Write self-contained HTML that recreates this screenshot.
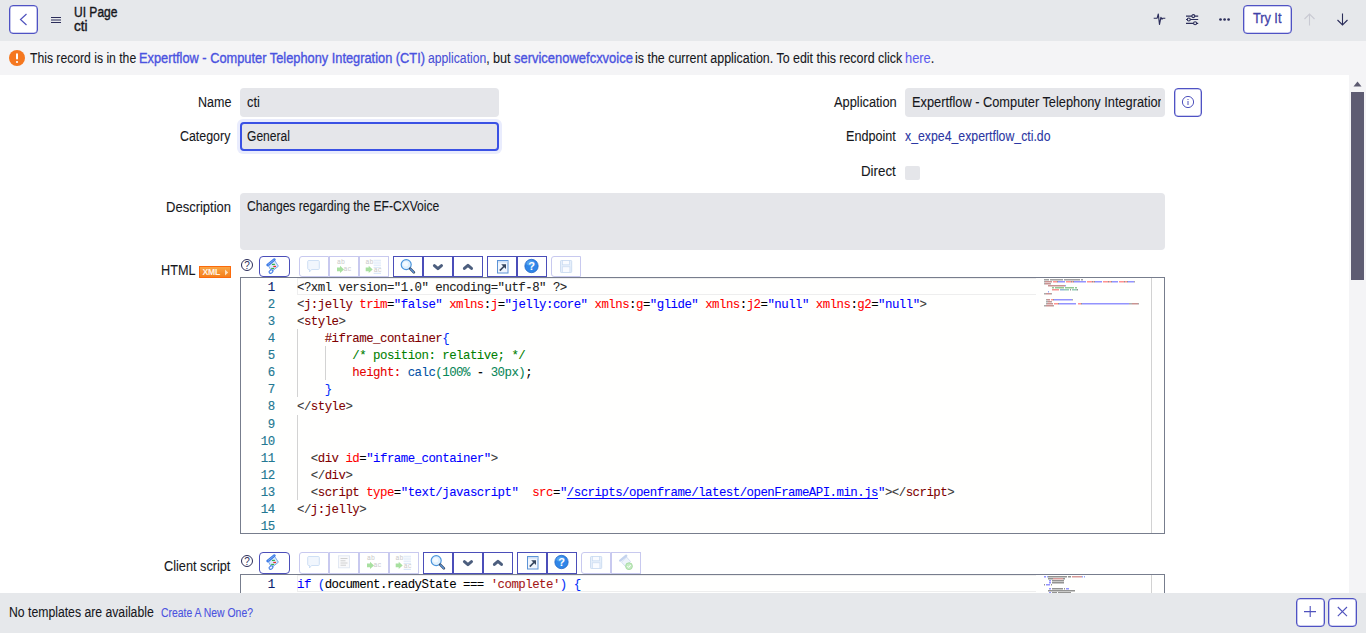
<!DOCTYPE html>
<html><head><meta charset="utf-8">
<style>
*{box-sizing:border-box;margin:0;padding:0}
html,body{width:1366px;height:633px;overflow:hidden;background:#fff}
body{position:relative;font-family:"Liberation Sans",sans-serif;color:#1b1d24;font-size:12.5px}
.abs{position:absolute}
#hdr{left:0;top:0;width:1366px;height:41px;background:#e6e8eb}
#ban{left:0;top:41px;width:1366px;height:34px;background:#f4f4f6}
#form{left:0;top:75px;width:1349px;height:518px;background:#fff;overflow:hidden}
#track{left:1349px;top:75px;width:17px;height:518px;background:#f4f4f6}
#foot{left:0;top:593px;width:1366px;height:40px;background:#e6e8eb}
.btnb{position:absolute;border:1px solid #4f52c4;border-radius:4px;background:#fff;box-shadow:inset 0 0 0 0.6px rgba(79,82,196,0.55)}
.t{position:absolute;white-space:nowrap;line-height:16px;height:16px;transform-origin:0 0;-webkit-text-stroke:0.1px currentColor}
.r{text-align:right}
.fld{position:absolute;background:#e5e6ea;border-radius:4px;white-space:nowrap;overflow:hidden;line-height:29px;padding-left:6.5px}
.ed{position:absolute;left:240px;width:925px;border:1px solid #777d8d;background:#fffffe;overflow:hidden}
.gut{position:absolute;left:0;top:0;width:56px;bottom:0;background:#fffffe}
.lnum{position:absolute;left:0;width:33.6px;text-align:right;color:#237893;font-family:"Liberation Mono",monospace;font-size:12.4px;letter-spacing:-0.52px;line-height:17.07px;-webkit-text-stroke:0.15px currentColor}
.code{position:absolute;left:56px;top:0;font-family:"Liberation Mono",monospace;font-size:12.4px;letter-spacing:-0.52px;line-height:17.07px;white-space:pre;-webkit-text-stroke:0.08px currentColor}
.ln{height:17.07px}
.cur{position:absolute;left:56px;width:739px;height:17px;border-top:1px solid #eeeeee;border-bottom:1px solid #eeeeee;border-left:1px solid #eeeeee}
.vsep{position:absolute;left:910px;top:0;bottom:0;width:1px;background:#d2d2d2}
.tb{position:absolute;height:21px;border:1px solid #4d50bb;background:#fff;display:flex}
.tb.dis{border-color:#c9caee}
.tb>div{width:30px;height:100%;border-right:1px solid #4d50bb;position:relative}
.tb.dis>div{border-right-color:#c9caee}
.tb>div:last-child{border-right:none}
.tb svg{position:absolute;left:50%;top:50%;transform:translate(-50%,-50%)}
.help{position:absolute;width:12.5px;height:12.5px;border:1px solid #2b2d5a;border-radius:50%;font-size:10px;line-height:11px;text-align:center;color:#2b2d5a}
.ig{position:absolute;width:1px;background:#d3d3d3}
</style></head><body>
<div id="hdr" class="abs"></div>
<div class="btnb" style="left:9px;top:5px;width:29px;height:29px"></div>
<svg class="abs" style="left:9px;top:5px" width="29" height="29" viewBox="0 0 29 29"><path d="M17.5 9 L11.5 14.5 L17.5 20" fill="none" stroke="#4f52bd" stroke-width="1.2"/></svg>
<svg class="abs" style="left:50px;top:15px" width="12" height="10" viewBox="0 0 12 10"><path d="M1 2.5H11M1 5H11M1 7.5H11" stroke="#2b2d5a" stroke-width="1.1"/></svg>
<div class="t" style="left:73.50px;top:3.85px;font-size:14px;transform:scaleX(0.859);color:#16171c;-webkit-text-stroke:0.4px #16171c">UI Page</div>
<div class="t" style="left:74.40px;top:17.85px;font-size:14px;transform:scaleX(0.971);color:#16171c;-webkit-text-stroke:0.4px #16171c">cti</div>
<svg class="abs" style="left:1150px;top:10px" width="20" height="20" viewBox="0 0 20 20"><path d="M3.7 8.2H7.2L8.3 4L9.5 14.5L10.9 7.3L12 9.2L12.6 8.2H15.3" fill="none" stroke="#2b2d5a" stroke-width="1.15" stroke-linejoin="round"/></svg>
<svg class="abs" style="left:1180px;top:10px" width="20" height="20" viewBox="0 0 20 20"><g fill="none" stroke="#2b2d5a" stroke-width="1.1"><path d="M6 6.1H18.2M6 9.5H18.2M6 13.4H18.2"/><circle cx="13.3" cy="6.1" r="1.5" fill="#e6e8eb"/><circle cx="8.8" cy="9.5" r="1.5" fill="#e6e8eb"/><circle cx="15.1" cy="13.2" r="1.5" fill="#e6e8eb"/></g></svg>
<svg class="abs" style="left:1218px;top:17px" width="13" height="5" viewBox="0 0 13 5"><circle cx="2.5" cy="2.5" r="1.35" fill="#2b2d5a"/><circle cx="6.6" cy="2.5" r="1.35" fill="#2b2d5a"/><circle cx="10.6" cy="2.5" r="1.35" fill="#2b2d5a"/></svg>
<div class="btnb" style="left:1243px;top:5px;width:49px;height:29px"></div>
<div class="t" style="left:1253.00px;top:10.35px;font-size:14px;transform:scaleX(0.906);color:#3f42a8;-webkit-text-stroke:0.3px #3f42a8">Try It</div>
<svg class="abs" style="left:1303px;top:13px" width="13" height="13" viewBox="0 0 13 13"><path d="M6.5 12.5V1M1.5 6L6.5 1L11.5 6" fill="none" stroke="#c9cad3" stroke-width="1.1"/></svg>
<svg class="abs" style="left:1336px;top:13px" width="13" height="13" viewBox="0 0 13 13"><path d="M6.5 0.5V12M1.5 7L6.5 12L11.5 7" fill="none" stroke="#2b2d5a" stroke-width="1.1"/></svg>
<div id="ban" class="abs"></div>
<svg class="abs" style="left:9px;top:50px" width="16" height="16" viewBox="0 0 16 16"><circle cx="8" cy="8" r="8" fill="#f5771f"/><rect x="7" y="3.2" width="2" height="6.3" rx="1" fill="#fff"/><circle cx="8" cy="12" r="1.1" fill="#fff"/></svg>
<div class="t" style="left:30.00px;top:49.95px;font-size:14px;transform:scaleX(0.869);color:#16171c">This record is in the</div>
<div class="t" style="left:139.10px;top:49.95px;font-size:14px;transform:scaleX(0.915);color:#4a52e0;-webkit-text-stroke:0.35px #4a52e0">Expertflow - Computer Telephony Integration (CTI)</div>
<div class="t" style="left:428.00px;top:49.95px;font-size:14px;transform:scaleX(0.871);color:#16171c"><span style="color:#4a4fd6">application</span>,</div>
<div class="t" style="left:492.60px;top:49.95px;font-size:14px;transform:scaleX(0.905);color:#16171c">but</div>
<div class="t" style="left:514.00px;top:49.95px;font-size:14px;transform:scaleX(0.926);color:#4a52e0;-webkit-text-stroke:0.35px #4a52e0">servicenowefcxvoice</div>
<div class="t" style="left:634.90px;top:49.95px;font-size:14px;transform:scaleX(0.888);color:#16171c">is the current application. To edit this record click</div>
<div class="t" style="left:904.60px;top:49.95px;font-size:14px;transform:scaleX(0.917);color:#16171c"><span style="color:#5b5bef">here</span>.</div>
<div id="form" class="abs"></div>
<div class="t" style="left:197.90px;top:94.15px;font-size:14px;transform:scaleX(0.894);color:#16171c">Name</div>
<div class="fld" style="left:240px;top:88px;width:259px;height:29px"></div>
<div class="t" style="left:246.50px;top:94.15px;font-size:14px;transform:scaleX(0.921);color:#16171c">cti</div>
<div class="t" style="left:180.00px;top:128.15px;font-size:14px;transform:scaleX(0.886);color:#16171c">Category</div>
<div class="abs" style="left:237px;top:119px;width:265px;height:35px;border-radius:6px;background:#e9ecfd"></div>
<div class="fld" style="left:240px;top:122px;width:259px;height:29px;border:2px solid #3a51e4"></div>
<div class="t" style="left:247.00px;top:128.15px;font-size:14px;transform:scaleX(0.861);color:#16171c">General</div>
<div class="t" style="left:833.70px;top:94.45px;font-size:14px;transform:scaleX(0.916);color:#16171c">Application</div>
<div class="fld" style="left:905px;top:88px;width:260px;height:29px"></div>
<div class="abs" style="left:905px;top:88px;width:255.5px;height:29px;overflow:hidden"><div class="t" style="left:7.10px;top:6.05px;font-size:14px;transform:scaleX(0.913);color:#16171c">Expertflow - Computer Telephony Integration (CTI)</div></div>
<div class="btnb" style="left:1174px;top:88px;width:28px;height:29px"></div>
<svg class="abs" style="left:1181px;top:95px" width="14" height="14" viewBox="0 0 14 14"><circle cx="7" cy="7" r="5.6" fill="none" stroke="#4f52bd" stroke-width="1"/><rect x="6.5" y="6" width="1" height="4" fill="#4f52bd"/><rect x="6.5" y="4" width="1" height="1" fill="#4f52bd"/></svg>
<div class="t" style="left:845.60px;top:128.05px;font-size:14px;transform:scaleX(0.900);color:#16171c">Endpoint</div>
<div class="t" style="left:905.30px;top:128.05px;font-size:14px;transform:scaleX(0.878);color:#2c37a3">x_expe4_expertflow_cti.do</div>
<div class="t" style="left:860.80px;top:163.05px;font-size:14px;transform:scaleX(0.950);color:#16171c">Direct</div>
<div class="abs" style="left:905px;top:166px;width:14.5px;height:14px;border-radius:2px;background:#e5e6ea"></div>
<div class="t" style="left:166.00px;top:198.95px;font-size:14px;transform:scaleX(0.929);color:#16171c">Description</div>
<div class="fld" style="left:240px;top:193px;width:925px;height:57px"></div>
<div class="t" style="left:246.50px;top:198.45px;font-size:14px;transform:scaleX(0.864);color:#16171c">Changes regarding the EF-CXVoice</div>
<div class="t" style="left:161.20px;top:261.85px;font-size:14px;transform:scaleX(0.905);color:#16171c">HTML</div>
<div class="abs" style="left:199px;top:266px;width:32px;height:12px;background:linear-gradient(#f9a545,#f47f1c);border:1px solid #fb6a0c"><span class="abs" style="left:2.5px;top:-0.5px;font-size:8.6px;line-height:11px;color:#fff3e4;font-weight:bold;letter-spacing:-0.2px">XML</span><svg class="abs" style="left:24px;top:2px" width="5" height="7" viewBox="0 0 5 7"><path d="M1 0.5L4.2 3.5L1 6.5Z" fill="#fde1bf"/></svg></div>
<div class="help" style="left:240.8px;top:258.5px">?</div>
<div class="abs" style="left:259px;top:256px;width:31px;height:21px;background:#fff;border:1.5px solid #4b4eb9;border-radius:4px"></div><svg class="abs" style="left:259px;top:256px" width="31" height="21" viewBox="0 0 31 21"><path d="M9.6 10L15.6 4.4L19.4 10.2L12.6 15.6Z" fill="#d9e9fc" stroke="#6c9fec" stroke-width="0.9"/>
<path d="M8.6 9L15.4 3.6" stroke="#3a78e6" stroke-width="2.6" stroke-linecap="round"/>
<path d="M9.2 8.4L15 3.9" stroke="#8db8f5" stroke-width="0.8" stroke-linecap="round"/>
<ellipse cx="12" cy="15.6" rx="2.1" ry="1.5" fill="#eef5fe" stroke="#3f7ae6" stroke-width="1.1" transform="rotate(-35 12 15.6)"/>
<path d="M12.9 8.4H15.9" stroke="#34b34a" stroke-width="1.2"/><path d="M14.3 10.5H17" stroke="#e3342c" stroke-width="1.3"/><path d="M12.2 12.5H15.1" stroke="#34b34a" stroke-width="1.2"/></svg><div class="abs" style="left:299px;top:256px;width:30px;height:21px;background:#fff;border:1px solid #c8c9ef;border-radius:3px 0 0 3px"></div><svg class="abs" style="left:299px;top:256px" width="30" height="21" viewBox="0 0 30 21"><path d="M8.7 5.5Q8.7 4.5 9.7 4.5H19.3Q20.3 4.5 20.3 5.5V12.5Q20.3 13.5 19.3 13.5H12.5L10.5 16V13.5H9.7Q8.7 13.5 8.7 12.5Z" fill="#f1f6fd" stroke="#cadcf4" stroke-width="0.9"/></svg><div class="abs" style="left:329px;top:256px;width:30px;height:21px;background:#fff;border:1px solid #c8c9ef"></div><svg class="abs" style="left:329px;top:256px" width="30" height="21" viewBox="0 0 30 21"><text x="8" y="8" font-size="6.5" fill="#c9c9c9" font-family="Liberation Mono">ab</text>
<path d="M8 11.6H11V9.8L15 13.4L11 17V15.2H8Z" fill="#a8e0a0"/>
<text x="14.5" y="15.4" font-size="6.5" fill="#c9c9c9" font-family="Liberation Mono">ac</text></svg><div class="abs" style="left:359px;top:256px;width:30px;height:21px;background:#fff;border:1px solid #c8c9ef"></div><svg class="abs" style="left:359px;top:256px" width="30" height="21" viewBox="0 0 30 21"><text x="6.6" y="8" font-size="6.5" fill="#c9c9c9" font-family="Liberation Mono">ab</text>
<path d="M14.6 4.3H22M14.6 6.1H22M14.6 7.9H22M14.6 9.7H22M14.6 11.5H22" stroke="#d6e4f6" stroke-width="0.8"/>
<path d="M6.7 11.6H9.7V9.8L13.7 13.4L9.7 17V15.2H6.7Z" fill="#a8e0a0"/>
<text x="14.8" y="15.6" font-size="6.5" fill="#c9c9c9" font-family="Liberation Mono">ac</text>
<path d="M14.6 17.3H22" stroke="#c6dbf5" stroke-width="0.8"/></svg><div class="abs" style="left:393px;top:256px;width:30px;height:21px;background:#fff;border:1px solid #4b4eb9"></div><svg class="abs" style="left:393px;top:256px" width="30" height="21" viewBox="0 0 30 21"><circle cx="13.2" cy="8.6" r="5" fill="#dff0fd" stroke="#4c95dc" stroke-width="1.2"/><circle cx="12.6" cy="8" r="2.5" fill="#f4faff"/><path d="M17.2 12.6L20.9 16.4" stroke="#3c4a5e" stroke-width="2.6" stroke-linecap="round"/><path d="M17.6 13L20.7 16.2" stroke="#5d95d8" stroke-width="1.3" stroke-linecap="round"/></svg><div class="abs" style="left:423px;top:256px;width:30px;height:21px;background:#fff;border:1px solid #4b4eb9"></div><svg class="abs" style="left:423px;top:256px" width="30" height="21" viewBox="0 0 30 21"><path d="M11.4 9.6L14.95 12.6L18.5 9.6" fill="none" stroke="#4c5e7e" stroke-width="3" stroke-linecap="round" stroke-linejoin="round"/></svg><div class="abs" style="left:453px;top:256px;width:30px;height:21px;background:#fff;border:1px solid #4b4eb9"></div><svg class="abs" style="left:453px;top:256px" width="30" height="21" viewBox="0 0 30 21"><path d="M11.4 12.4L14.95 9.3L18.5 12.4" fill="none" stroke="#4c5e7e" stroke-width="3" stroke-linecap="round" stroke-linejoin="round"/></svg><div class="abs" style="left:487px;top:256px;width:30px;height:21px;background:#fff;border:1px solid #4b4eb9"></div><svg class="abs" style="left:487px;top:256px" width="30" height="21" viewBox="0 0 30 21"><rect x="10.5" y="4.5" width="10.5" height="12.5" fill="#f1f6fd" stroke="#5c93d6" stroke-width="1"/><rect x="11" y="5" width="9.5" height="1.6" fill="#cfe0f6"/><path d="M12.8 14.6L17.6 9.8" stroke="#36465e" stroke-width="1.6"/><path d="M14.2 8.2H19V13Z" fill="#36465e"/></svg><div class="abs" style="left:517px;top:256px;width:30px;height:21px;background:#fff;border:1px solid #4b4eb9"></div><svg class="abs" style="left:517px;top:256px" width="30" height="21" viewBox="0 0 30 21"><circle cx="14.5" cy="10" r="6.7" fill="#2f86e8" stroke="#1c5fc0" stroke-width="0.7"/><ellipse cx="13.6" cy="7" rx="4.2" ry="2.6" fill="#6db5f5" opacity="0.55"/><text x="14.5" y="14.2" font-size="11" font-weight="bold" text-anchor="middle" fill="#fff" font-family="Liberation Sans">?</text></svg><div class="abs" style="left:551px;top:256px;width:30px;height:21px;background:#fff;border:1px solid #c8c9ef;border-radius:3px 0 0 3px"></div><svg class="abs" style="left:551px;top:256px" width="30" height="21" viewBox="0 0 30 21"><rect x="9.5" y="4.5" width="11.2" height="12" rx="0.8" fill="#e6effb" stroke="#c9daf1" stroke-width="0.9"/><rect x="11.5" y="4.6" width="7" height="4.2" fill="#f9fbff" stroke="#c9daf1" stroke-width="0.7"/><rect x="11.3" y="10.8" width="7.6" height="5.6" fill="#f9fbff" stroke="#c9daf1" stroke-width="0.7"/></svg>
<div class="ed" style="top:277px;height:257px">
 <div class="lnum" style="top:2px"><div style="height:17.07px;color:#0b216f">1</div><div style="height:17.07px">2</div><div style="height:17.07px">3</div><div style="height:17.07px">4</div><div style="height:17.07px">5</div><div style="height:17.07px">6</div><div style="height:17.07px">7</div><div style="height:17.07px">8</div><div style="height:17.07px">9</div><div style="height:17.07px">10</div><div style="height:17.07px">11</div><div style="height:17.07px">12</div><div style="height:17.07px">13</div><div style="height:17.07px">14</div><div style="height:17.07px">15</div></div>
 <div class="cur" style="top:0"></div>
 <div class="ig" style="left:56px;top:51.2px;height:68.3px"></div>
 <div class="ig" style="left:84px;top:68.3px;height:34.1px"></div>
 <div class="ig" style="left:56px;top:136.6px;height:85.3px"></div>
 <div class="code" style="top:2px"><div class="ln"><span style="color:#222222">&lt;?xml version="1.0" encoding="utf-8" ?&gt;</span></div><div class="ln"><span style="color:#383838">&lt;</span><span style="color:#800000">j:jelly</span><span style="color:#000000"> </span><span style="color:#ff0000">trim</span><span style="color:#000000">=</span><span style="color:#0000ff">"false"</span><span style="color:#000000"> </span><span style="color:#ff0000">xmlns</span><span style="color:#000000">:</span><span style="color:#ff0000">j</span><span style="color:#000000">=</span><span style="color:#0000ff">"jelly:core"</span><span style="color:#000000"> </span><span style="color:#ff0000">xmlns</span><span style="color:#000000">:</span><span style="color:#ff0000">g</span><span style="color:#000000">=</span><span style="color:#0000ff">"glide"</span><span style="color:#000000"> </span><span style="color:#ff0000">xmlns</span><span style="color:#000000">:</span><span style="color:#ff0000">j2</span><span style="color:#000000">=</span><span style="color:#0000ff">"null"</span><span style="color:#000000"> </span><span style="color:#ff0000">xmlns</span><span style="color:#000000">:</span><span style="color:#ff0000">g2</span><span style="color:#000000">=</span><span style="color:#0000ff">"null"</span><span style="color:#383838">&gt;</span></div><div class="ln"><span style="color:#383838">&lt;</span><span style="color:#800000">style</span><span style="color:#383838">&gt;</span></div><div class="ln"><span style="color:#000000">    </span><span style="color:#800000">#iframe_container</span><span style="color:#0431fa">{</span></div><div class="ln"><span style="color:#000000">        </span><span style="color:#008000">/* position: relative; */</span></div><div class="ln"><span style="color:#000000">        </span><span style="color:#e50000">height:</span><span style="color:#000000"> </span><span style="color:#0451a5">calc</span><span style="color:#098658">(100%</span><span style="color:#000000"> - </span><span style="color:#098658">30px)</span><span style="color:#000000">;</span></div><div class="ln"><span style="color:#000000">    </span><span style="color:#0431fa">}</span></div><div class="ln"><span style="color:#383838">&lt;/</span><span style="color:#800000">style</span><span style="color:#383838">&gt;</span></div><div class="ln"></div><div class="ln"></div><div class="ln"><span style="color:#000000">  </span><span style="color:#383838">&lt;</span><span style="color:#800000">div</span><span style="color:#000000"> </span><span style="color:#ff0000">id</span><span style="color:#000000">=</span><span style="color:#0000ff">"iframe_container"</span><span style="color:#383838">&gt;</span></div><div class="ln"><span style="color:#000000">  </span><span style="color:#383838">&lt;/</span><span style="color:#800000">div</span><span style="color:#383838">&gt;</span></div><div class="ln"><span style="color:#000000">  </span><span style="color:#383838">&lt;</span><span style="color:#800000">script</span><span style="color:#000000"> </span><span style="color:#ff0000">type</span><span style="color:#000000">=</span><span style="color:#0000ff">"text/javascript"</span><span style="color:#000000">  </span><span style="color:#ff0000">src</span><span style="color:#000000">=</span><span style="color:#0000ff">"</span><span style="color:#0000ff;text-decoration:underline;text-underline-offset:2px;text-decoration-skip-ink:none">/scripts/openframe/latest/openFrameAPI.min.js</span><span style="color:#0000ff">"</span><span style="color:#383838">&gt;&lt;/</span><span style="color:#800000">script</span><span style="color:#383838">&gt;</span></div><div class="ln"><span style="color:#383838">&lt;/</span><span style="color:#800000">j:jelly</span><span style="color:#383838">&gt;</span></div><div class="ln"></div></div>
 <svg class="abs" style="left:803px;top:1px;opacity:0.42" width="110" height="32"><rect x="0" y="0" width="5" height="1.5" fill="#222222"/><rect x="6" y="0" width="13" height="1.5" fill="#222222"/><rect x="20" y="0" width="16" height="1.5" fill="#222222"/><rect x="37" y="0" width="2" height="1.5" fill="#222222"/><rect x="0" y="2" width="1" height="1.5" fill="#383838"/><rect x="1" y="2" width="7" height="1.5" fill="#800000"/><rect x="9" y="2" width="4" height="1.5" fill="#ff0000"/><rect x="13" y="2" width="1" height="1.5" fill="#000000"/><rect x="14" y="2" width="7" height="1.5" fill="#0000ff"/><rect x="22" y="2" width="5" height="1.5" fill="#ff0000"/><rect x="27" y="2" width="1" height="1.5" fill="#000000"/><rect x="28" y="2" width="1" height="1.5" fill="#ff0000"/><rect x="29" y="2" width="1" height="1.5" fill="#000000"/><rect x="30" y="2" width="12" height="1.5" fill="#0000ff"/><rect x="43" y="2" width="5" height="1.5" fill="#ff0000"/><rect x="48" y="2" width="1" height="1.5" fill="#000000"/><rect x="49" y="2" width="1" height="1.5" fill="#ff0000"/><rect x="50" y="2" width="1" height="1.5" fill="#000000"/><rect x="51" y="2" width="7" height="1.5" fill="#0000ff"/><rect x="59" y="2" width="5" height="1.5" fill="#ff0000"/><rect x="64" y="2" width="1" height="1.5" fill="#000000"/><rect x="65" y="2" width="2" height="1.5" fill="#ff0000"/><rect x="67" y="2" width="1" height="1.5" fill="#000000"/><rect x="68" y="2" width="6" height="1.5" fill="#0000ff"/><rect x="75" y="2" width="5" height="1.5" fill="#ff0000"/><rect x="80" y="2" width="1" height="1.5" fill="#000000"/><rect x="81" y="2" width="2" height="1.5" fill="#ff0000"/><rect x="83" y="2" width="1" height="1.5" fill="#000000"/><rect x="84" y="2" width="6" height="1.5" fill="#0000ff"/><rect x="90" y="2" width="1" height="1.5" fill="#383838"/><rect x="0" y="4" width="1" height="1.5" fill="#383838"/><rect x="1" y="4" width="5" height="1.5" fill="#800000"/><rect x="6" y="4" width="1" height="1.5" fill="#383838"/><rect x="4" y="6" width="17" height="1.5" fill="#800000"/><rect x="21" y="6" width="1" height="1.5" fill="#0431fa"/><rect x="8" y="8" width="2" height="1.5" fill="#008000"/><rect x="11" y="8" width="9" height="1.5" fill="#008000"/><rect x="21" y="8" width="9" height="1.5" fill="#008000"/><rect x="31" y="8" width="2" height="1.5" fill="#008000"/><rect x="8" y="10" width="7" height="1.5" fill="#e50000"/><rect x="16" y="10" width="4" height="1.5" fill="#0451a5"/><rect x="20" y="10" width="5" height="1.5" fill="#098658"/><rect x="26" y="10" width="1" height="1.5" fill="#000000"/><rect x="28" y="10" width="5" height="1.5" fill="#098658"/><rect x="33" y="10" width="1" height="1.5" fill="#000000"/><rect x="4" y="12" width="1" height="1.5" fill="#0431fa"/><rect x="0" y="14" width="2" height="1.5" fill="#383838"/><rect x="2" y="14" width="5" height="1.5" fill="#800000"/><rect x="7" y="14" width="1" height="1.5" fill="#383838"/><rect x="2" y="20" width="1" height="1.5" fill="#383838"/><rect x="3" y="20" width="3" height="1.5" fill="#800000"/><rect x="7" y="20" width="2" height="1.5" fill="#ff0000"/><rect x="9" y="20" width="1" height="1.5" fill="#000000"/><rect x="10" y="20" width="18" height="1.5" fill="#0000ff"/><rect x="28" y="20" width="1" height="1.5" fill="#383838"/><rect x="2" y="22" width="2" height="1.5" fill="#383838"/><rect x="4" y="22" width="3" height="1.5" fill="#800000"/><rect x="7" y="22" width="1" height="1.5" fill="#383838"/><rect x="2" y="24" width="1" height="1.5" fill="#383838"/><rect x="3" y="24" width="6" height="1.5" fill="#800000"/><rect x="10" y="24" width="4" height="1.5" fill="#ff0000"/><rect x="14" y="24" width="1" height="1.5" fill="#000000"/><rect x="15" y="24" width="17" height="1.5" fill="#0000ff"/><rect x="34" y="24" width="3" height="1.5" fill="#ff0000"/><rect x="37" y="24" width="1" height="1.5" fill="#000000"/><rect x="38" y="24" width="1" height="1.5" fill="#0000ff"/><rect x="39" y="24" width="45" height="1.5" fill="#0000ff"/><rect x="84" y="24" width="1" height="1.5" fill="#0000ff"/><rect x="85" y="24" width="3" height="1.5" fill="#383838"/><rect x="88" y="24" width="6" height="1.5" fill="#800000"/><rect x="94" y="24" width="1" height="1.5" fill="#383838"/><rect x="0" y="26" width="2" height="1.5" fill="#383838"/><rect x="2" y="26" width="7" height="1.5" fill="#800000"/><rect x="9" y="26" width="1" height="1.5" fill="#383838"/></svg>
 <div class="vsep"></div>
</div>
<div class="t" style="left:164.20px;top:557.95px;font-size:14px;transform:scaleX(0.908);color:#16171c">Client script</div>
<div class="help" style="left:240.8px;top:554.5px">?</div>
<div class="abs" style="left:259px;top:552px;width:31px;height:22px;background:#fff;border:1.5px solid #4b4eb9;border-radius:4px"></div><svg class="abs" style="left:259px;top:552px" width="31" height="22" viewBox="0 0 31 22"><path d="M9.6 10L15.6 4.4L19.4 10.2L12.6 15.6Z" fill="#d9e9fc" stroke="#6c9fec" stroke-width="0.9"/>
<path d="M8.6 9L15.4 3.6" stroke="#3a78e6" stroke-width="2.6" stroke-linecap="round"/>
<path d="M9.2 8.4L15 3.9" stroke="#8db8f5" stroke-width="0.8" stroke-linecap="round"/>
<ellipse cx="12" cy="15.6" rx="2.1" ry="1.5" fill="#eef5fe" stroke="#3f7ae6" stroke-width="1.1" transform="rotate(-35 12 15.6)"/>
<path d="M12.9 8.4H15.9" stroke="#34b34a" stroke-width="1.2"/><path d="M14.3 10.5H17" stroke="#e3342c" stroke-width="1.3"/><path d="M12.2 12.5H15.1" stroke="#34b34a" stroke-width="1.2"/></svg><div class="abs" style="left:299px;top:552px;width:30px;height:22px;background:#fff;border:1px solid #c8c9ef;border-radius:3px 0 0 3px"></div><svg class="abs" style="left:299px;top:552px" width="30" height="22" viewBox="0 0 30 22"><path d="M8.7 5.5Q8.7 4.5 9.7 4.5H19.3Q20.3 4.5 20.3 5.5V12.5Q20.3 13.5 19.3 13.5H12.5L10.5 16V13.5H9.7Q8.7 13.5 8.7 12.5Z" fill="#f1f6fd" stroke="#cadcf4" stroke-width="0.9"/></svg><div class="abs" style="left:329px;top:552px;width:30px;height:22px;background:#fff;border:1px solid #c8c9ef"></div><svg class="abs" style="left:329px;top:552px" width="30" height="22" viewBox="0 0 30 22"><rect x="9.5" y="3.8" width="11" height="12" fill="#f9f9fb" stroke="#dfe6f2" stroke-width="0.9"/><path d="M11.5 6.5H18.5M11.5 8.8H16.5M11.5 11H18.5M11.5 13.2H17" stroke="#d0d0d0" stroke-width="1"/></svg><div class="abs" style="left:359px;top:552px;width:30px;height:22px;background:#fff;border:1px solid #c8c9ef"></div><svg class="abs" style="left:359px;top:552px" width="30" height="22" viewBox="0 0 30 22"><text x="8" y="8" font-size="6.5" fill="#c9c9c9" font-family="Liberation Mono">ab</text>
<path d="M8 11.6H11V9.8L15 13.4L11 17V15.2H8Z" fill="#a8e0a0"/>
<text x="14.5" y="15.4" font-size="6.5" fill="#c9c9c9" font-family="Liberation Mono">ac</text></svg><div class="abs" style="left:389px;top:552px;width:30px;height:22px;background:#fff;border:1px solid #c8c9ef"></div><svg class="abs" style="left:389px;top:552px" width="30" height="22" viewBox="0 0 30 22"><text x="6.6" y="8" font-size="6.5" fill="#c9c9c9" font-family="Liberation Mono">ab</text>
<path d="M14.6 4.3H22M14.6 6.1H22M14.6 7.9H22M14.6 9.7H22M14.6 11.5H22" stroke="#d6e4f6" stroke-width="0.8"/>
<path d="M6.7 11.6H9.7V9.8L13.7 13.4L9.7 17V15.2H6.7Z" fill="#a8e0a0"/>
<text x="14.8" y="15.6" font-size="6.5" fill="#c9c9c9" font-family="Liberation Mono">ac</text>
<path d="M14.6 17.3H22" stroke="#c6dbf5" stroke-width="0.8"/></svg><div class="abs" style="left:423px;top:552px;width:30px;height:22px;background:#fff;border:1px solid #4b4eb9"></div><svg class="abs" style="left:423px;top:552px" width="30" height="22" viewBox="0 0 30 22"><circle cx="13.2" cy="8.6" r="5" fill="#dff0fd" stroke="#4c95dc" stroke-width="1.2"/><circle cx="12.6" cy="8" r="2.5" fill="#f4faff"/><path d="M17.2 12.6L20.9 16.4" stroke="#3c4a5e" stroke-width="2.6" stroke-linecap="round"/><path d="M17.6 13L20.7 16.2" stroke="#5d95d8" stroke-width="1.3" stroke-linecap="round"/></svg><div class="abs" style="left:453px;top:552px;width:30px;height:22px;background:#fff;border:1px solid #4b4eb9"></div><svg class="abs" style="left:453px;top:552px" width="30" height="22" viewBox="0 0 30 22"><path d="M11.4 9.6L14.95 12.6L18.5 9.6" fill="none" stroke="#4c5e7e" stroke-width="3" stroke-linecap="round" stroke-linejoin="round"/></svg><div class="abs" style="left:483px;top:552px;width:30px;height:22px;background:#fff;border:1px solid #4b4eb9"></div><svg class="abs" style="left:483px;top:552px" width="30" height="22" viewBox="0 0 30 22"><path d="M11.4 12.4L14.95 9.3L18.5 12.4" fill="none" stroke="#4c5e7e" stroke-width="3" stroke-linecap="round" stroke-linejoin="round"/></svg><div class="abs" style="left:517px;top:552px;width:30px;height:22px;background:#fff;border:1px solid #4b4eb9"></div><svg class="abs" style="left:517px;top:552px" width="30" height="22" viewBox="0 0 30 22"><rect x="10.5" y="4.5" width="10.5" height="12.5" fill="#f1f6fd" stroke="#5c93d6" stroke-width="1"/><rect x="11" y="5" width="9.5" height="1.6" fill="#cfe0f6"/><path d="M12.8 14.6L17.6 9.8" stroke="#36465e" stroke-width="1.6"/><path d="M14.2 8.2H19V13Z" fill="#36465e"/></svg><div class="abs" style="left:547px;top:552px;width:30px;height:22px;background:#fff;border:1px solid #4b4eb9"></div><svg class="abs" style="left:547px;top:552px" width="30" height="22" viewBox="0 0 30 22"><circle cx="14.5" cy="10" r="6.7" fill="#2f86e8" stroke="#1c5fc0" stroke-width="0.7"/><ellipse cx="13.6" cy="7" rx="4.2" ry="2.6" fill="#6db5f5" opacity="0.55"/><text x="14.5" y="14.2" font-size="11" font-weight="bold" text-anchor="middle" fill="#fff" font-family="Liberation Sans">?</text></svg><div class="abs" style="left:581px;top:552px;width:30px;height:22px;background:#fff;border:1px solid #c8c9ef;border-radius:3px 0 0 3px"></div><svg class="abs" style="left:581px;top:552px" width="30" height="22" viewBox="0 0 30 22"><rect x="9.5" y="4.5" width="11.2" height="12" rx="0.8" fill="#e6effb" stroke="#c9daf1" stroke-width="0.9"/><rect x="11.5" y="4.6" width="7" height="4.2" fill="#f9fbff" stroke="#c9daf1" stroke-width="0.7"/><rect x="11.3" y="10.8" width="7.6" height="5.6" fill="#f9fbff" stroke="#c9daf1" stroke-width="0.7"/></svg><div class="abs" style="left:611px;top:552px;width:30px;height:22px;background:#fff;border:1px solid #c8c9ef"></div><svg class="abs" style="left:611px;top:552px" width="30" height="22" viewBox="0 0 30 22"><path d="M10.5 10.2L15.5 5L19.5 9.5L14.5 14.6Z" fill="#eef3fb" stroke="#cfdbef" stroke-width="0.9"/>
<path d="M9.2 8.6L15.2 3.8" stroke="#c4d3ee" stroke-width="2.4" stroke-linecap="round"/>
<circle cx="18" cy="14.2" r="3.4" fill="#c5ebc3" stroke="#9fd79b" stroke-width="0.8"/><path d="M16.4 14.2L17.6 15.4L19.7 13" fill="none" stroke="#fff" stroke-width="1"/></svg>
<div class="ed" style="top:574px;height:60px">
 <div class="lnum" style="top:2px"><div style="height:17px;color:#0b216f">1</div><div style="height:17px">2</div></div>
 <div class="cur" style="top:0"></div>
 <div class="code" style="top:2px"><div class="ln"><span style="color:#0000ff">if</span><span style="color:#000000"> </span><span style="color:#0431fa">(</span><span style="color:#000000">document.readyState === </span><span style="color:#a31515">'complete'</span><span style="color:#0431fa">)</span><span style="color:#000000"> </span><span style="color:#0431fa">{</span></div></div>
 <svg class="abs" style="left:803px;top:1px;opacity:0.42" width="110" height="20"><rect x="0" y="0" width="2" height="1.5" fill="#0000ff"/><rect x="3" y="0" width="1" height="1.5" fill="#0431fa"/><rect x="4" y="0" width="19" height="1.5" fill="#000000"/><rect x="24" y="0" width="3" height="1.5" fill="#000000"/><rect x="28" y="0" width="10" height="1.5" fill="#a31515"/><rect x="38" y="0" width="1" height="1.5" fill="#0431fa"/><rect x="40" y="0" width="1" height="1.5" fill="#0431fa"/><rect x="4" y="2" width="5" height="1.5" fill="#000000"/><rect x="9" y="2" width="10" height="1.5" fill="#a31515"/><rect x="19" y="2" width="2" height="1.5" fill="#000000"/><rect x="5" y="4" width="2" height="1.5" fill="#0000ff"/><rect x="8" y="4" width="12" height="1.5" fill="#000000"/><rect x="5" y="6" width="2" height="1.5" fill="#0000ff"/><rect x="8" y="6" width="12" height="1.5" fill="#000000"/><rect x="0" y="8" width="1" height="1.5" fill="#000000"/><rect x="2" y="8" width="4" height="1.5" fill="#0000ff"/><rect x="7" y="8" width="1" height="1.5" fill="#000000"/><rect x="5" y="12" width="2" height="1.5" fill="#0000ff"/><rect x="8" y="12" width="11" height="1.5" fill="#000000"/><rect x="20" y="12" width="1" height="1.5" fill="#000000"/><rect x="22" y="12" width="3" height="1.5" fill="#0000ff"/><rect x="4" y="14" width="27" height="1.5" fill="#000000"/><rect x="5" y="16" width="2" height="1.5" fill="#0000ff"/><rect x="8" y="16" width="5" height="1.5" fill="#000000"/><rect x="14" y="16" width="13" height="1.5" fill="#000000"/></svg>
 <div class="vsep"></div>
</div>
<div id="track" class="abs"></div>
<svg class="abs" style="left:1349px;top:75px" width="17" height="17" viewBox="0 0 17 17"><path d="M4.5 11.5L8.5 6.5L12.5 11.5Z" fill="#5c5a70"/></svg>
<div class="abs" style="left:1351px;top:92px;width:13px;height:188px;background:#5e5c72"></div>
<div id="foot" class="abs"></div>
<div class="t" style="left:8.80px;top:603.85px;font-size:14px;transform:scaleX(0.873);color:#16171c">No templates are available</div>
<div class="t" style="left:160.50px;top:604.84px;font-size:12px;transform:scaleX(0.867);color:#4a52e0">Create A New One?</div>
<div class="btnb" style="left:1296px;top:598px;width:29px;height:29px"></div>
<svg class="abs" style="left:1300px;top:602px" width="20" height="20" viewBox="0 0 20 20"><path d="M10.2 4V15M4 9.6H16" stroke="#4f52bd" stroke-width="1.1"/></svg>
<div class="btnb" style="left:1328px;top:598px;width:29px;height:29px"></div>
<svg class="abs" style="left:1332px;top:602px" width="20" height="20" viewBox="0 0 20 20"><path d="M5.8 5L15 14.2M15 5L5.8 14.2" stroke="#4f52bd" stroke-width="1.1"/></svg>
</body></html>
